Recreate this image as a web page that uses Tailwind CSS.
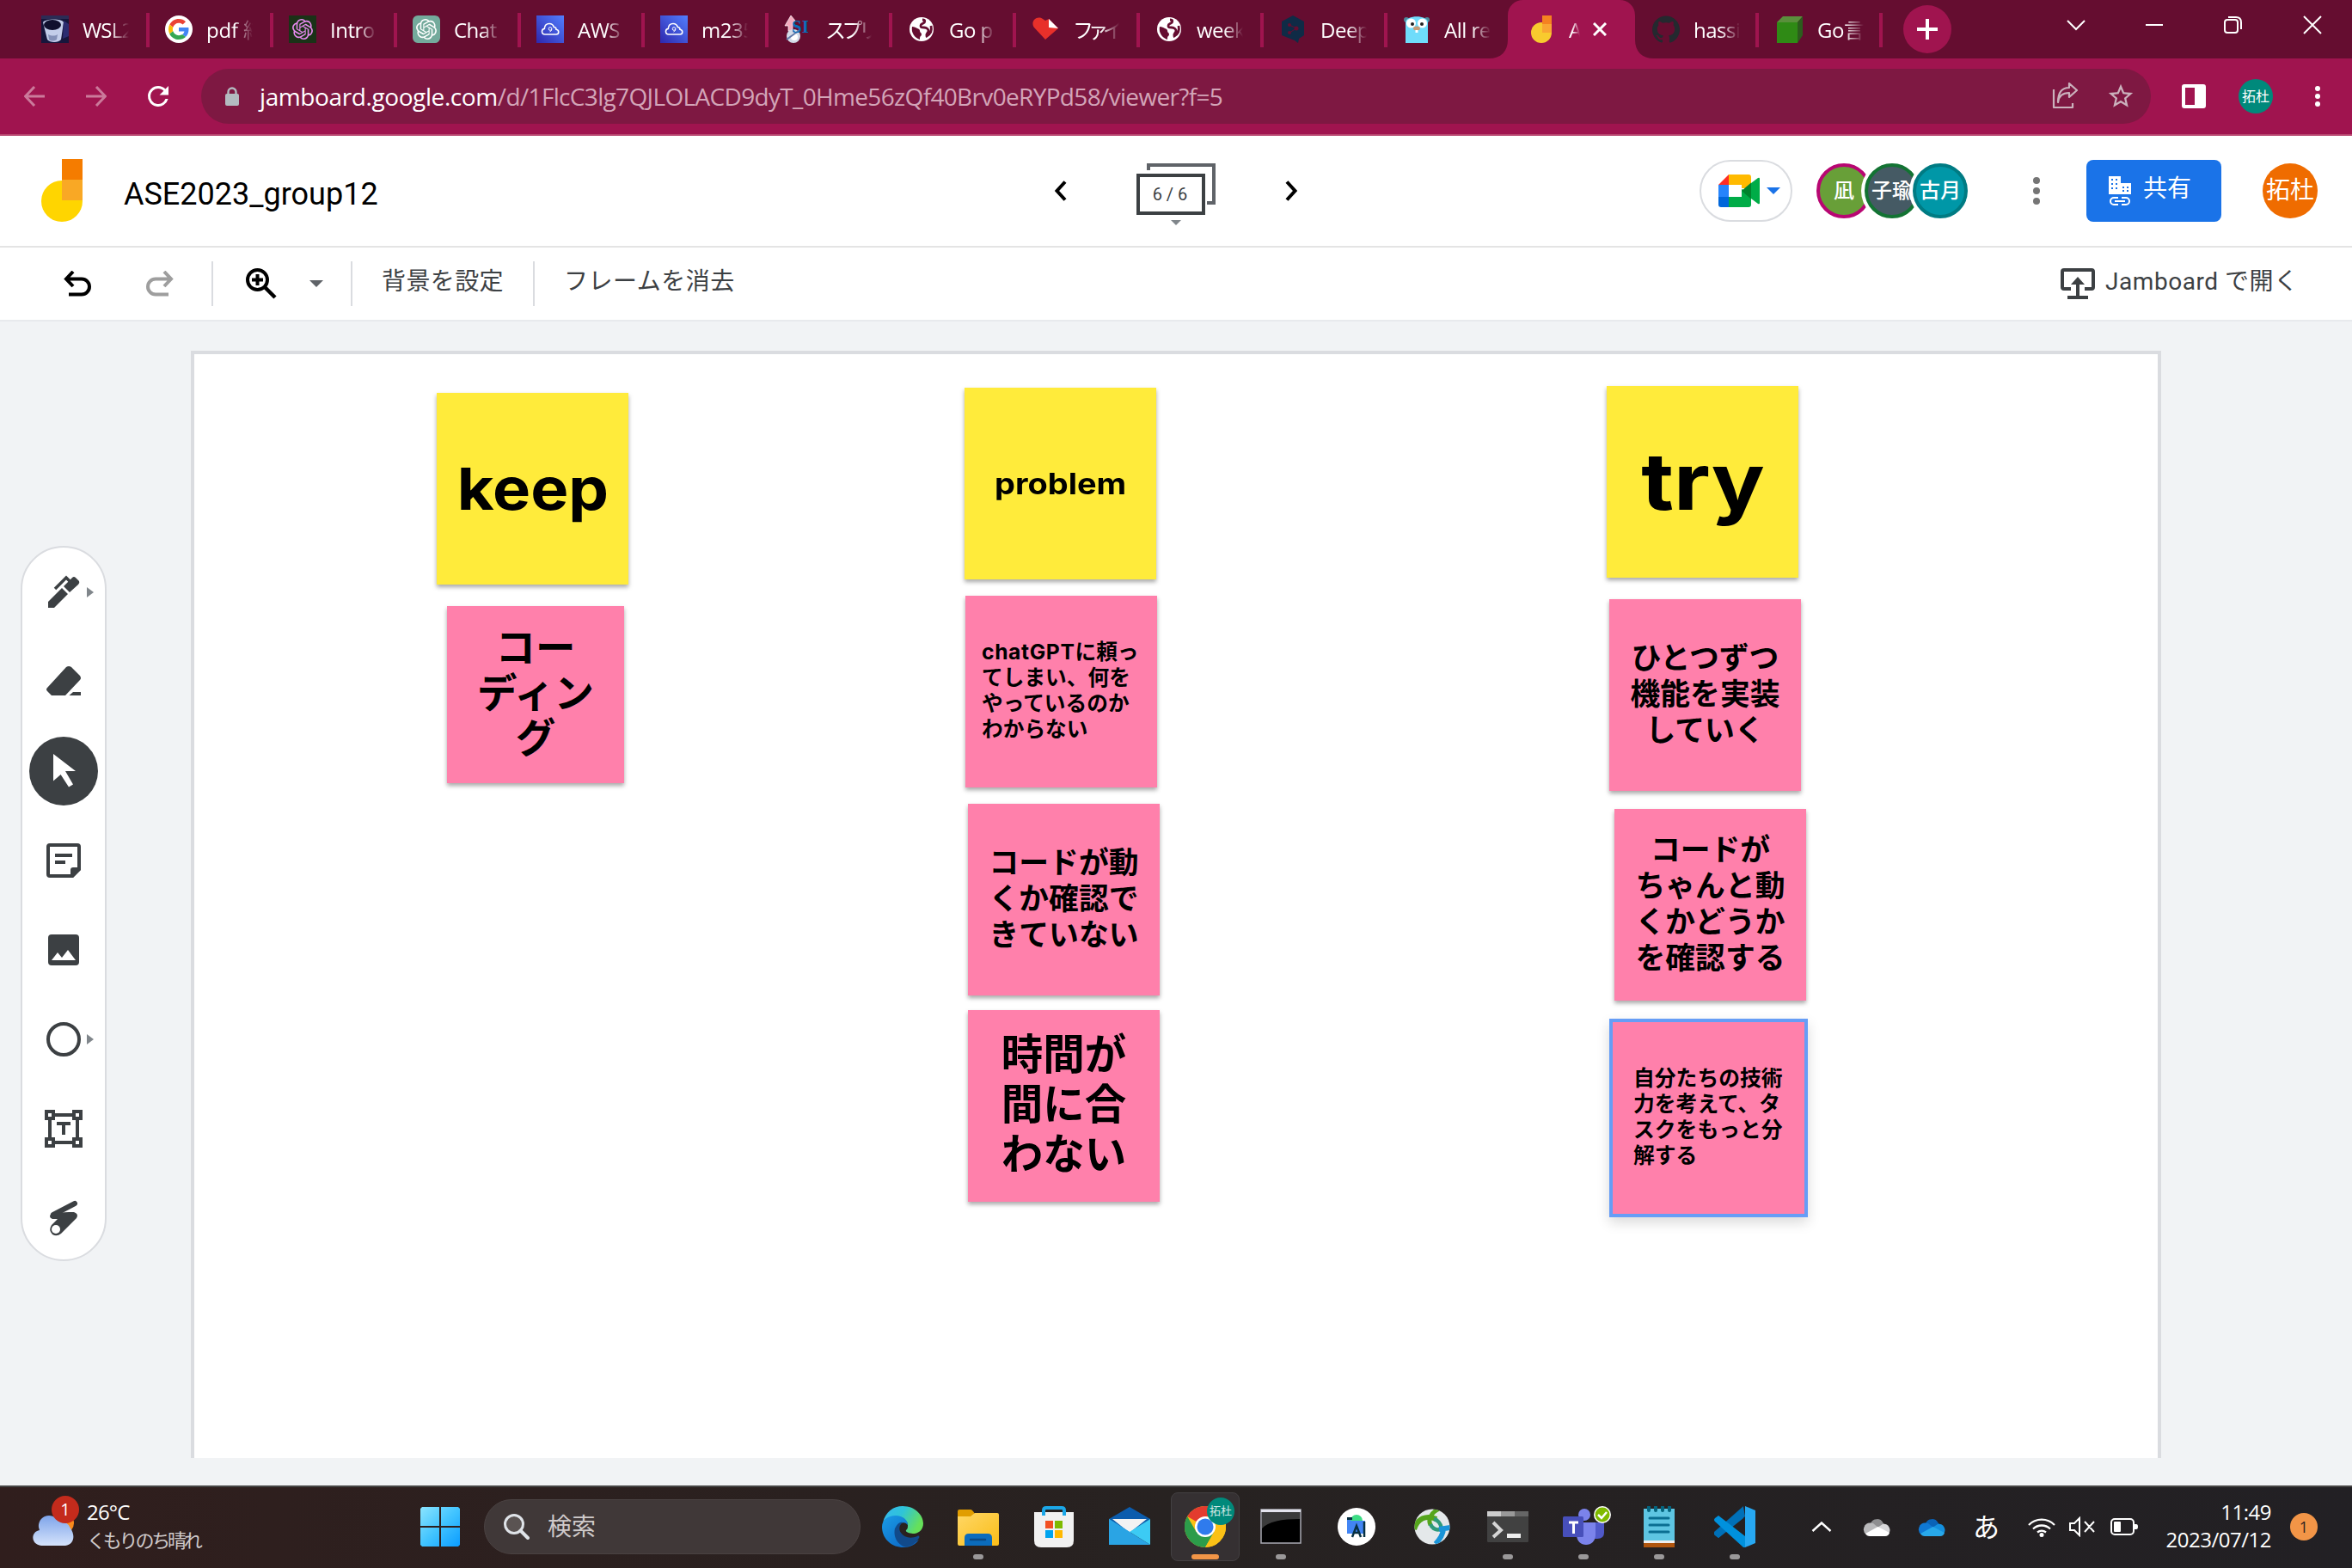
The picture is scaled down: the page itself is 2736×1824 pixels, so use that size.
<!DOCTYPE html>
<html lang="ja">
<head>
<meta charset="utf-8">
<title>ASE2023_group12 - Google Jamboard</title>
<script src="https://cdn.jsdelivr.net/npm/@tailwindcss/browser@4"></script>
</head>
<body class="w-[2736px] h-[1824px] overflow-hidden bg-[#f1f3f5] flex flex-col font-['Open_Sans','Noto_Sans_CJK_JP',sans-serif]">

<svg class="absolute size-0">
  <symbol id="openai" viewBox="0 0 24 24"><path d="M22.2819 9.8211a5.9847 5.9847 0 0 0-.5157-4.9108 6.0462 6.0462 0 0 0-6.5098-2.9A6.0651 6.0651 0 0 0 4.9807 4.1818a5.9847 5.9847 0 0 0-3.9977 2.9 6.0462 6.0462 0 0 0 .7427 7.0966 5.98 5.98 0 0 0 .511 4.9107 6.051 6.051 0 0 0 6.5146 2.9001A5.9847 5.9847 0 0 0 13.2599 24a6.0557 6.0557 0 0 0 5.7718-4.2058 5.9894 5.9894 0 0 0 3.9977-2.9001 6.0557 6.0557 0 0 0-.7475-7.0729zm-9.022 12.6081a4.4755 4.4755 0 0 1-2.8764-1.0408l.1419-.0804 4.7783-2.7582a.7948.7948 0 0 0 .3927-.6813v-6.7369l2.02 1.1686a.071.071 0 0 1 .038.0615v5.5826a4.504 4.504 0 0 1-4.4945 4.4944zm-9.6607-4.1254a4.4708 4.4708 0 0 1-.5346-3.0137l.142.0852 4.783 2.7582a.7712.7712 0 0 0 .7806 0l5.8428-3.3685v2.3324a.0804.0804 0 0 1-.0332.0615L9.74 19.9502a4.4992 4.4992 0 0 1-6.1408-1.6464zM2.3408 7.8956a4.485 4.485 0 0 1 2.3655-1.9728V11.6a.7664.7664 0 0 0 .3879.6765l5.8144 3.3543-2.0201 1.1685a.0757.0757 0 0 1-.071 0l-4.8303-2.7865A4.504 4.504 0 0 1 2.3408 7.872zm16.5963 3.8558L13.1038 8.364 15.1192 7.2a.0757.0757 0 0 1 .071 0l4.8303 2.7913a4.4944 4.4944 0 0 1-.6765 8.1042v-5.6772a.79.79 0 0 0-.407-.667zm2.0107-3.0231l-.142-.0852-4.7735-2.7818a.7759.7759 0 0 0-.7854 0L9.409 9.2297V6.8974a.0662.0662 0 0 1 .0284-.0615l4.8303-2.7866a4.4992 4.4992 0 0 1 6.6802 4.66zM8.3065 12.863l-2.02-1.1638a.0804.0804 0 0 1-.038-.0567V6.0742a4.4992 4.4992 0 0 1 7.3757-3.4537l-.142.0805L8.704 5.459a.7948.7948 0 0 0-.3927.6813zm1.0976-2.3654l2.602-1.4998 2.6069 1.4998v2.9994l-2.5974 1.4997-2.6067-1.4997Z"/></symbol>
  <symbol id="globe" viewBox="0 0 32 32"><circle cx="16" cy="16" r="14" fill="#fff"/><path d="M5 13c3 0 4 1 6 2s3 1 3 3 2 2 2 4-2 2-2 4v2a13 13 0 0 1-9-15z" fill="#650d30"/><path d="M17 5c4 0 3 3 1 4s-3 1-3 3 1 2 4 2 5 2 5 4-3 3-2 6c5-3 6-8 5-12" fill="none" stroke="#650d30" stroke-width="2.800"/></symbol>
  <symbol id="awscloud" viewBox="0 0 32 32"><rect width="32" height="32" fill="url(#awsg)"/><path d="M10 22c-2.500 0-3.500-1.700-3.500-3.400 0-1.700 1.200-3 2.800-3.200C9.500 11.500 12 9.500 15 9.500c3 0 4.700 1.900 5.300 4 1.700 0 2.700 1.300 2.700 2.700 1.800.2 2.800 1.500 2.800 3 0 1.700-1.200 2.800-3 2.800z" fill="none" stroke="#fff" stroke-width="1.600"/><circle cx="16" cy="15.500" r="1.800" fill="none" stroke="#fff" stroke-width="1"/><path d="M17.800 15.500c0 2-.8 3-2.300 3.500" fill="none" stroke="#fff" stroke-width="1"/></symbol>
  <symbol id="cloud" viewBox="0 0 32 22"><path d="M9 7A8 8 0 0 1 23.500 6.500L27 10 16 13z" fill="var(--a)"/><path d="M9 6.500A7.500 7.500 0 0 0 4 20L18 12 12 7z" fill="var(--b)"/><path d="M17 12l6-4a7 7 0 0 1 7 11z" fill="var(--c)"/><path d="M3 19l14.500-8L31 18c-.7 2.500-2.500 4-5 4H8c-2.500 0-4-1-5-3z" fill="var(--d)"/></symbol>
  <defs><linearGradient id="awsg" x1="0" y1="1" x2="1" y2="0"><stop offset="0" stop-color="#2e27ad"/><stop offset="1" stop-color="#527fff"/></linearGradient></defs>
</svg>

<!-- Tab strip -->
<div class="h-[68px] shrink-0 bg-[#650d30] flex pl-7 text-white text-[24px]">
  <div class="w-[144px] flex items-center pl-5 relative"><svg class="size-8 mr-4 shrink-0" viewBox="0 0 32 32"><rect width="32" height="32" fill="#16163c"/><rect width="32" height="4" fill="#2b2c55"/><path d="M2 8c2-4 21-5 24 0l-3 20c-3 4-13 4-16 0z" fill="#c3cdea"/><ellipse cx="13" cy="11" rx="10" ry="6" fill="#10102e"/><path d="M8 22c4 2 8 2 11 0l-1 6c-3 2-7 2-9 0z" fill="#8490b8"/><path d="M26 6l6 4v14l-7 3z" fill="#2b2c70"/></svg><span class="w-[54px] pt-[2px] overflow-hidden whitespace-nowrap tracking-[-0.8px] [mask-image:linear-gradient(to_right,black_60%,transparent)]">WSL2</span><i class="absolute -right-[2px] top-[15px] w-1 h-10 bg-[#a0144f]"></i></div>
  <div class="w-[144px] flex items-center pl-5 relative"><svg class="size-8 mr-4 shrink-0" viewBox="-8 -8 64 64"><circle cx="24" cy="24" r="32" fill="#fff"/><path fill="#EA4335" d="M24 9.500c3.540 0 6.710 1.220 9.210 3.600l6.850-6.850C35.900 2.380 30.470 0 24 0 14.620 0 6.510 5.380 2.560 13.220l7.980 6.190C12.430 13.720 17.740 9.500 24 9.500z"/><path fill="#4285F4" d="M46.980 24.550c0-1.570-.15-3.090-.38-4.550H24v9.020h12.940c-.58 2.960-2.260 5.480-4.780 7.180l7.730 6c4.510-4.180 7.090-10.360 7.090-17.650z"/><path fill="#FBBC05" d="M10.530 28.590c-.48-1.450-.76-2.990-.76-4.590s.27-3.140.76-4.590l-7.980-6.190C.92 16.460 0 20.120 0 24c0 3.880.92 7.540 2.560 10.780l7.970-6.190z"/><path fill="#34A853" d="M24 48c6.480 0 11.930-2.130 15.890-5.810l-7.730-6c-2.150 1.450-4.920 2.300-8.160 2.300-6.260 0-11.570-4.220-13.470-9.910l-7.980 6.190C6.510 42.620 14.620 48 24 48z"/></svg><span class="w-[54px] pt-[2px] overflow-hidden whitespace-nowrap tracking-[-0.2px] [mask-image:linear-gradient(to_right,black_60%,transparent)]">pdf 結</span><i class="absolute -right-[2px] top-[15px] w-1 h-10 bg-[#a0144f]"></i></div>
  <div class="w-[144px] flex items-center pl-5 relative"><div class="size-8 mr-4 shrink-0 bg-[#1a3217] grid place-items-center"><svg class="size-6 fill-[#e88af0]"><use href="#openai"/></svg></div><span class="w-[54px] pt-[2px] overflow-hidden whitespace-nowrap tracking-[-0.5px] [mask-image:linear-gradient(to_right,black_60%,transparent)]">Intro</span><i class="absolute -right-[2px] top-[15px] w-1 h-10 bg-[#a0144f]"></i></div>
  <div class="w-[144px] flex items-center pl-5 relative"><div class="size-8 mr-4 shrink-0 bg-[#74aa9c] rounded-md grid place-items-center"><svg class="size-6 fill-white"><use href="#openai"/></svg></div><span class="w-[54px] pt-[2px] overflow-hidden whitespace-nowrap tracking-[-0.5px] [mask-image:linear-gradient(to_right,black_60%,transparent)]">Chat</span><i class="absolute -right-[2px] top-[15px] w-1 h-10 bg-[#a0144f]"></i></div>
  <div class="w-[144px] flex items-center pl-5 relative"><svg class="size-8 mr-4 shrink-0"><use href="#awscloud"/></svg><span class="w-[54px] pt-[2px] overflow-hidden whitespace-nowrap tracking-[-0.5px] [mask-image:linear-gradient(to_right,black_60%,transparent)]">AWS</span><i class="absolute -right-[2px] top-[15px] w-1 h-10 bg-[#a0144f]"></i></div>
  <div class="w-[144px] flex items-center pl-5 relative"><svg class="size-8 mr-4 shrink-0"><use href="#awscloud"/></svg><span class="w-[54px] pt-[2px] overflow-hidden whitespace-nowrap tracking-[-0.5px] [mask-image:linear-gradient(to_right,black_60%,transparent)]">m235</span><i class="absolute -right-[2px] top-[15px] w-1 h-10 bg-[#a0144f]"></i></div>
  <div class="w-[144px] flex items-center pl-5 relative"><svg class="size-8 mr-4 shrink-0" viewBox="0 0 32 32"><path d="M8 0l5 6-3 2v10H5v-6H1z" fill="#f4a9bd" stroke="#fff" stroke-width=".7"/><circle cx="11" cy="24" r="8" fill="#d3dbe8"/><circle cx="12" cy="25" r="4" fill="#fff"/><path d="M3 28l15-11" stroke="#6179a8" stroke-width="2"/><text x="9" y="20" font-family="Liberation Serif,serif" font-weight="bold" font-size="21" fill="#0a6db8">SI</text></svg><span class="w-[54px] pt-[1px] overflow-hidden whitespace-nowrap tracking-[-4.5px] [mask-image:linear-gradient(to_right,black_60%,transparent)]">スプリ</span><i class="absolute -right-[2px] top-[15px] w-1 h-10 bg-[#a0144f]"></i></div>
  <div class="w-[144px] flex items-center pl-5 relative"><svg class="size-8 mr-4 shrink-0"><use href="#globe"/></svg><span class="w-[54px] pt-[2px] overflow-hidden whitespace-nowrap tracking-[-0.5px] [mask-image:linear-gradient(to_right,black_60%,transparent)]">Go p</span><i class="absolute -right-[2px] top-[15px] w-1 h-10 bg-[#a0144f]"></i></div>
  <div class="w-[144px] flex items-center pl-5 relative"><svg class="size-8 mr-4 shrink-0" viewBox="0 0 32 32"><path d="M16 28L3 14C-2 7 6-1 13 4l3 2 4-2 11 11z" fill="#e8302a"/><path d="M20 4l11 11-11-1z" fill="#fff"/></svg><span class="w-[54px] pt-[1px] overflow-hidden whitespace-nowrap tracking-[-6.500px] [mask-image:linear-gradient(to_right,black_60%,transparent)]">ファイル</span><i class="absolute -right-[2px] top-[15px] w-1 h-10 bg-[#a0144f]"></i></div>
  <div class="w-[144px] flex items-center pl-5 relative"><svg class="size-8 mr-4 shrink-0"><use href="#globe"/></svg><span class="w-[54px] pt-[2px] overflow-hidden whitespace-nowrap tracking-[-0.5px] [mask-image:linear-gradient(to_right,black_60%,transparent)]">week</span><i class="absolute -right-[2px] top-[15px] w-1 h-10 bg-[#a0144f]"></i></div>
  <div class="w-[144px] flex items-center pl-5 relative"><svg class="size-8 mr-4 shrink-0" viewBox="0 0 32 32"><path d="M16 0l13 7v16l-6 4-1 5-4-3L3 23V7z" fill="#0f2b46"/><g fill="#650d30"><circle cx="12" cy="11" r="2"/><circle cx="20" cy="15" r="2.500"/><circle cx="12" cy="20" r="2"/></g><path d="M12 11l8 4-8 5" stroke="#650d30" fill="none"/></svg><span class="w-[54px] pt-[2px] overflow-hidden whitespace-nowrap tracking-[-0.5px] [mask-image:linear-gradient(to_right,black_60%,transparent)]">Deep</span><i class="absolute -right-[2px] top-[15px] w-1 h-10 bg-[#a0144f]"></i></div>
  <div class="w-[144px] flex items-center pl-5 relative"><svg class="size-8 mr-4 shrink-0" viewBox="0 0 32 32"><circle cx="4" cy="5" r="3" fill="#4d8a9c"/><circle cx="28" cy="5" r="3" fill="#4d8a9c"/><path d="M3 32V8c0-9 26-9 26 0v24z" fill="#6fdcfb"/><circle cx="9.500" cy="9" r="5.500" fill="#fff"/><circle cx="22.500" cy="9" r="5.500" fill="#fff"/><circle cx="11" cy="10" r="2" fill="#222"/><circle cx="22" cy="10" r="2" fill="#222"/><ellipse cx="16" cy="15" rx="4" ry="2.500" fill="#c79b77"/><path d="M14.500 17h3v3h-3z" fill="#fff"/></svg><span class="w-[54px] pt-[2px] overflow-hidden whitespace-nowrap tracking-[-0.5px] [mask-image:linear-gradient(to_right,black_60%,transparent)]">All re</span></div>
  <div class="w-[144px] flex items-center pl-[25px] relative"><svg class="absolute -left-[24px] top-0 w-[192px] h-[68px]" viewBox="0 0 192 68"><path d="M0 68c14 0 22-8 22-22V18C22 7 30 0 40 0H152c10 0 18 7 18 18v28c0 14 8 22 22 22z" fill="#a0144f"/></svg><svg class="relative w-6 h-8 mr-5 shrink-0" viewBox="0 0 24 32"><circle cx="12" cy="20" r="12" fill="#f8cb2e"/><path d="M13 0h11v12H13z" fill="#f58220"/><path d="M13 10h11v10H13z" fill="#f9a633"/></svg><span class="relative w-[13px] pt-[2px] overflow-hidden [mask-image:linear-gradient(to_right,black_30%,transparent)]">A</span><svg class="relative size-4 ml-[15px]" viewBox="0 0 16 16"><path d="M1 1l14 14M15 1L1 15" stroke="#fff" stroke-width="3"/></svg></div>
  <div class="w-[144px] flex items-center pl-[22px] relative"><svg class="size-8 mr-4 shrink-0" viewBox="0 0 24 24"><path fill="#24292f" d="M12 .297c-6.630 0-12 5.373-12 12 0 5.303 3.438 9.800 8.205 11.385.6.113.82-.258.82-.577 0-.285-.010-1.040-.015-2.040-3.338.724-4.042-1.610-4.042-1.610C4.422 18.070 3.633 17.700 3.633 17.700c-1.087-.744.084-.729.084-.729 1.205.084 1.838 1.236 1.838 1.236 1.070 1.835 2.809 1.305 3.495.998.108-.776.417-1.305.760-1.605-2.665-.3-5.466-1.332-5.466-5.930 0-1.310.465-2.380 1.235-3.220-.135-.303-.54-1.523.105-3.176 0 0 1.005-.322 3.300 1.230.96-.267 1.980-.399 3-.405 1.020.006 2.040.138 3 .405 2.280-1.552 3.285-1.230 3.285-1.230.645 1.653.24 2.873.12 3.176.765.840 1.230 1.910 1.230 3.220 0 4.610-2.805 5.625-5.475 5.920.42.360.81 1.096.81 2.220 0 1.606-.015 2.896-.015 3.286 0 .315.210.690.825.570C20.565 22.092 24 17.592 24 12.297c0-6.627-5.373-12-12-12"/></svg><span class="w-[54px] pt-[2px] overflow-hidden whitespace-nowrap tracking-[-0.5px] [mask-image:linear-gradient(to_right,black_60%,transparent)]">hassi</span><i class="absolute -right-[2px] top-[15px] w-1 h-10 bg-[#a0144f]"></i></div>
  <div class="w-[144px] flex items-center pl-[22px] relative"><svg class="size-8 mr-4 shrink-0" viewBox="0 0 32 32"><path d="M1 8L8 1h23l-6 7z" fill="#5a8f3c"/><path d="M1 8h24v24H1z" fill="#2f8a15"/><path d="M25 8l6-7v22l-6 9z" fill="#2c5d1d"/></svg><span class="w-[54px] pt-[2px] overflow-hidden whitespace-nowrap tracking-[-0.5px] [mask-image:linear-gradient(to_right,black_60%,transparent)]">Go言</span><i class="absolute -right-[2px] top-[15px] w-1 h-10 bg-[#a0144f]"></i></div>
  <div class="ml-[26px] mt-[6px] size-14 rounded-full bg-[#a0144f] grid place-items-center"><svg class="size-6" viewBox="0 0 24 24"><path d="M12 0v24M0 12h24" stroke="#fff" stroke-width="4"/></svg></div>
  <svg class="ml-[134px] mt-[18px] w-[22px] h-[22px]" viewBox="0 0 22 22"><path d="M1 6l10 10L21 6" fill="none" stroke="#fff" stroke-width="2"/></svg>
  <svg class="ml-[70px] mt-[18px] w-5 h-[22px]" viewBox="0 0 20 22"><path d="M0 11h20" stroke="#fff" stroke-width="2"/></svg>
  <svg class="ml-[71px] mt-[18px] w-[22px] h-[22px]" viewBox="0 0 22 22"><rect x="1" y="5" width="15" height="15" rx="3" fill="none" stroke="#fff" stroke-width="2"/><path d="M5 2h9q6 0 6 6v8" fill="none" stroke="#fff" stroke-width="2"/></svg>
  <svg class="ml-[70px] mt-[18px] w-[22px] h-[22px]" viewBox="0 0 22 22"><path d="M1 1l20 20M21 1L1 21" stroke="#fff" stroke-width="2"/></svg>
</div>

<!-- Address bar -->
<div class="h-[90px] shrink-0 bg-[#a0144f] border-b-2 border-[#b8466f] flex items-center pl-7">
  <svg class="w-6 h-6" viewBox="0 0 24 24"><path d="M24 12H2M12 1L1.500 12 12 23" fill="none" stroke="#cb7a9b" stroke-width="3"/></svg>
  <svg class="w-6 h-6 ml-[48px]" viewBox="0 0 24 24"><path d="M0 12h22M12 1l10.500 11L12 23" fill="none" stroke="#cb7a9b" stroke-width="3"/></svg>
  <svg class="size-9 ml-[42px]" viewBox="0 0 24 24"><path d="M17.650 6.350A7.950 7.950 0 0 0 12 4a8 8 0 1 0 7.730 10h-2.080A6 6 0 1 1 12 6c1.660 0 3.140.69 4.220 1.780L13 11h7V4z" fill="#fff"/></svg>
  <div class="ml-[32px] w-[2268px] h-16 rounded-full bg-[#7e1842] flex items-center pl-[28px] text-[28px] whitespace-nowrap">
    <svg class="w-4 h-[22px] mr-6" viewBox="0 0 16 22"><rect y="8" width="16" height="14" rx="2" fill="#b3bac0"/><path d="M3.500 9V6a4.500 4.500 0 0 1 9 0v3" fill="none" stroke="#b3bac0" stroke-width="2.400"/></svg>
    <span class="w-[1120px] text-[#d3a5b8] tracking-[-0.660px]"><span class="text-white tracking-[-0.400px]">jamboard.google.com</span>/d/1FlcC3lg7QJLOLACD9dyT_0Hme56zQf40Brv0eRYPd58/viewer?f=5</span>
    <svg class="ml-[965px] w-8 h-8" viewBox="0 0 32 32"><path d="M2 8v21h22v-5M7 23c1-8 6-11 13-11V17l9-8-9-8v5C11 6 7 12 7 23z" fill="none" stroke="#cbb2bd" stroke-width="2.200" stroke-linejoin="round"/></svg>
    <svg class="ml-[31px] size-[34px]" viewBox="0 0 24 24"><path fill="#cbb2bd" d="M22 9.240l-7.190-.62L12 2 9.190 8.630 2 9.240l5.460 4.730L5.820 21 12 17.270 18.180 21l-1.630-7.030L22 9.240zM12 15.400l-3.760 2.270 1-4.280-3.320-2.880 4.380-.38L12 6.100l1.710 4.040 4.380.38-3.320 2.880 1 4.280L12 15.400z"/></svg>
  </div>
  <svg class="ml-[36px] size-7" viewBox="0 0 28 28"><path fill-rule="evenodd" d="M3 0h22a3 3 0 0 1 3 3v22a3 3 0 0 1-3 3H3a3 3 0 0 1-3-3V3a3 3 0 0 1 3-3zm1 4v20h11V4z" fill="#fff"/></svg>
  <div class="ml-[38px] size-10 rounded-full bg-[#00897b] text-white text-[16px] grid place-items-center">拓杜</div>
  <svg class="ml-[49px] w-[6px] h-6" viewBox="0 0 6 24"><g fill="#fff"><circle cx="3" cy="3" r="3"/><circle cx="3" cy="12" r="3"/><circle cx="3" cy="21" r="3"/></g></svg>
</div>

<!-- Document header -->
<div class="h-[130px] shrink-0 bg-white border-b-2 border-[#e4e4e4] flex items-center pl-12 font-['Roboto','Noto_Sans_CJK_JP',sans-serif]">
  <svg class="w-12 h-[74px]" viewBox="0 0 48 74"><circle cx="24" cy="49" r="24" fill="#ffd500"/><path d="M24 0h24v24H24z" fill="#f57c00"/><path d="M24 24h24v24H24z" fill="#f9a825"/></svg>
  <div class="ml-[48px] w-[300px] text-[36px] whitespace-nowrap text-black pt-[7px]">ASE2023_group12</div>
  <svg class="ml-[783px] w-[14px] h-6" viewBox="0 0 14 24"><path d="M12 1.500L2.500 12 12 22.500" fill="none" stroke="#000" stroke-width="4"/></svg>
  <div class="ml-[81px] w-[92px] h-[72px] relative">
    <svg class="absolute inset-0 w-[92px] h-[76px]" viewBox="0 0 92 76"><path d="M14 12V6h76v44h-8" fill="none" stroke="#5f6368" stroke-width="4"/><rect x="2" y="18" width="76" height="44" fill="#fff" stroke="#3c4043" stroke-width="4"/><path d="M40 70h12l-6 6z" fill="#80868b"/></svg>
    <div class="absolute -left-px top-[16px] w-20 h-12 grid place-items-center text-[20px] text-[#3c4043]">6 / 6</div>
  </div>
  <svg class="ml-[81px] w-[14px] h-6" viewBox="0 0 14 24"><path d="M2 1.500L11.500 12 2 22.500" fill="none" stroke="#000" stroke-width="4"/></svg>
  <div class="ml-[468px] w-[108px] h-[72px] rounded-full border-2 border-[#dadce0] flex items-center pl-5">
    <svg class="w-12 h-[38px]" viewBox="0 0 48 38"><path d="M12 0v12H0z" fill="#ff2d25"/><path d="M0 12h12v14H0z" fill="#2684fc"/><path d="M0 26h12v12H3a3 3 0 0 1-3-3z" fill="#0066da"/><path d="M12 0h23a3 3 0 0 1 3 3v13H27v-4H12z" fill="#ffba00"/><path d="M12 26h15V17l11 4v14a3 3 0 0 1-3 3H12z" fill="#00ac47"/><path d="M27 19L38 9.500v19z" fill="#00832d"/><path d="M38 10l8-6q2-1 2 1v28q0 2-2 1l-8-6z" fill="#00ac47"/></svg>
    <svg class="ml-2 w-4 h-2" viewBox="0 0 16 8"><path d="M0 0h16L8 8z" fill="#1a73e8"/></svg>
  </div>
  <div class="ml-[24px] flex text-white text-[24px] font-medium">
    <div class="size-[72px] rounded-full bg-white grid place-items-center"><div class="size-16 rounded-full bg-[#689f38] border-4 border-[#b80672] grid place-items-center">凪</div></div>
    <div class="-ml-4 size-[72px] rounded-full bg-white grid place-items-center"><div class="size-16 rounded-full bg-[#455a64] border-4 border-[#137333] flex items-center justify-center whitespace-nowrap">子瑜</div></div>
    <div class="-ml-4 size-[72px] rounded-full bg-white grid place-items-center"><div class="size-16 rounded-full bg-[#0097a7] border-4 border-[#007b83] flex items-center justify-center whitespace-nowrap">古月</div></div>
  </div>
  <svg class="ml-[72px] w-2 h-8" viewBox="0 0 8 32"><g fill="#757575"><circle cx="4" cy="4" r="4"/><circle cx="4" cy="16" r="4"/><circle cx="4" cy="28" r="4"/></g></svg>
  <div class="ml-[54px] w-[157px] h-[72px] rounded-lg bg-[#1a73e8] flex items-center pl-[26px] text-white text-[28px]">
    <svg class="w-[26px] h-[34px]" viewBox="0 0 26 34"><path fill-rule="evenodd" fill="#fff" d="M0 0h14v8h12v13H0zM3 3v2h2V3zm5 0v2h2V3zM3 8v2h2V8zm5 0v2h2V8zM3 13v2h2v-2zm5 0v2h2v-2zM16 12v2h2v-2zm5 0v2h2v-2zM16 16v2h2v-2zm5 0v2h2v-2z"/><path d="M11 25H6a4 4 0 0 0 0 8h5M15 25h5a4 4 0 0 1 0 8h-5M7 29h12" fill="none" stroke="#fff" stroke-width="2"/></svg>
    <span class="ml-[14px] -mt-1">共有</span>
  </div>
  <div class="ml-[48px] size-16 rounded-full bg-[#ef6c00] text-white text-[28px] grid place-items-center">拓杜</div>
</div>

<!-- Jam toolbar -->
<div class="h-[86px] shrink-0 bg-white border-b-2 border-[#e8eaed] flex items-center pl-[74px] pr-[66px] text-[28px] text-[#3c4043] font-['Roboto','Noto_Sans_CJK_JP',sans-serif]">
  <svg class="w-8 h-[30px]" viewBox="0 0 32 30"><path d="M11 1L3 9.500 11 18M3 9.500h18a9 9 0 0 1 0 18H6" fill="none" stroke="#000" stroke-width="4"/></svg>
  <svg class="ml-16 w-8 h-[30px]" viewBox="0 0 32 30"><path d="M21 1l8 8.500L21 18M29 9.500H11a9 9 0 0 0 0 18h15" fill="none" stroke="#9e9e9e" stroke-width="4"/></svg>
  <i class="ml-11 w-[2px] h-[52px] bg-[#dadce0]"></i>
  <svg class="ml-[38px] w-9 h-9" viewBox="0 0 36 36"><circle cx="13.500" cy="13.500" r="11.500" fill="none" stroke="#000" stroke-width="4"/><path d="M22 22l12 12" stroke="#000" stroke-width="4.500"/><path d="M13.500 7v13M7 13.500h13" stroke="#000" stroke-width="4"/></svg>
  <svg class="ml-[38px] w-4 h-2" viewBox="0 0 16 8"><path d="M0 0h16L8 8z" fill="#5f6368"/></svg>
  <i class="ml-8 w-[2px] h-[52px] bg-[#dadce0]"></i>
  <span class="ml-[34px] w-[142px] -mt-1 whitespace-nowrap tracking-[0.400px]">背景を設定</span>
  <i class="ml-[34px] w-[2px] h-[52px] bg-[#dadce0]"></i>
  <span class="ml-[34px] -mt-1 whitespace-nowrap tracking-[0.500px]">フレームを消去</span>
  <div class="ml-auto flex items-center">
    <svg class="w-10 h-9" viewBox="0 0 40 36"><path d="M12 24H4a2 2 0 0 1-2-2V4a2 2 0 0 1 2-2h32a2 2 0 0 1 2 2v18a2 2 0 0 1-2 2h-8" fill="none" stroke="#3c4043" stroke-width="4"/><path d="M20 10l8 9h-6v13h10v4H8v-4h10V19h-6z" fill="#3c4043"/></svg>
    <span class="ml-3 -mt-1 w-[221px] whitespace-nowrap tracking-[0.550px]">Jamboard で開く</span>
  </div>
</div>

<!-- Workspace -->
<div class="relative flex-1 overflow-hidden">
  <div class="absolute left-[222px] top-[34px] w-[2292px] h-[1288px] bg-white border-4 border-b-0 border-[#dadce0]"></div>

  <!-- Tool palette -->
  <div class="absolute left-6 top-[261px] w-[100px] h-[832px] rounded-full bg-white border-2 border-[#dadce0] flex flex-col items-center pt-[12px] gap-6 text-[#3c4043]">
    <div class="relative size-20 grid place-items-center"><svg class="size-12 fill-current" viewBox="0 0 48 48"><path d="M6 42v-7l16-16 7 7-16 16zM24 17L34 7q2-2 4 0l4 4q1 2-1 4L31 24z"/><path d="M14 20L27 7l4 4" fill="none" stroke="currentColor" stroke-width="3.500"/></svg><svg class="absolute left-[67px] top-[34px] w-2 h-3" viewBox="0 0 8 12"><path d="M0 0l8 6-8 6z" fill="#80868b"/></svg></div>
    <div class="size-20 grid place-items-center"><svg class="size-12 fill-current" viewBox="0 0 48 48"><path d="M5 31L27 7q3-2 6 0l10 10q2 3 0 5L26 40H10l-5-5q-2-2 0-4zM30.500 40l4.500-4h9v4z"/></svg></div>
    <div class="size-20 rounded-full bg-[#3c4043] grid place-items-center"><svg class="size-12" viewBox="0 0 48 48"><path d="M12 4l26 20H26l9 15.500-5 3L20.600 28 12 35.500z" fill="#fff"/></svg></div>
    <div class="size-20 grid place-items-center"><svg class="size-12" viewBox="0 0 48 48"><path d="M8 6h32q2 0 2 2v26l-8 8H8q-2 0-2-2V8q0-2 2-2z" fill="none" stroke="currentColor" stroke-width="4"/><path d="M32 44V35q0-3 3-3h9v3l-9 9z" fill="currentColor"/><path d="M14 18h20M14 26h12" stroke="currentColor" stroke-width="4"/></svg></div>
    <div class="size-20 grid place-items-center"><svg class="size-12" viewBox="0 0 48 48"><rect x="6" y="6" width="36" height="36" rx="4" fill="currentColor"/><path d="M10 36l7-9 5 6 7-9 9 12z" fill="#fff"/></svg></div>
    <div class="relative size-20 grid place-items-center"><svg class="size-12" viewBox="0 0 48 48"><circle cx="24" cy="24" r="18" fill="none" stroke="currentColor" stroke-width="4"/></svg><svg class="absolute left-[67px] top-[34px] w-2 h-3" viewBox="0 0 8 12"><path d="M0 0l8 6-8 6z" fill="#80868b"/></svg></div>
    <div class="size-20 grid place-items-center"><svg class="size-12" viewBox="0 0 48 48"><g fill="none" stroke="currentColor" stroke-width="4"><path d="M14 8h20M14 40h20M8 14v20M40 14v20M4 4h8v8H4zM36 4h8v8h-8zM4 36h8v8H4zM36 36h8v8h-8z"/><path d="M16 18h16M24 18v13"/></g></svg></div>
    <div class="size-20 grid place-items-center"><svg class="size-12" viewBox="0 0 48 48"><path d="M12 20L37 7" stroke="currentColor" stroke-width="6" stroke-linecap="round"/><path d="M8 22q0-3 4-4l18-1h6q6 2 3 7L21 42q-5 4-10 1-5-5-1-11l7-7h-6q-3-1-3-3z" fill="currentColor"/><circle cx="15" cy="37" r="5" fill="#fff"/></svg></div>
  </div>

  <!-- Sticky notes -->
  <div class="absolute inset-0 font-['Inter','Noto_Sans_CJK_JP',sans-serif] font-bold text-black text-center">
    <div class="absolute left-[508px] top-[83px] size-[223px] bg-[#ffeb3b] shadow-[0_3px_5px_rgba(0,0,0,0.35)] flex items-center justify-center text-[68px]"><span class="scale-x-[1.09] pb-[2px]">keep</span></div>
    <div class="absolute left-[520px] top-[331px] size-[206px] bg-[#ff80ab] shadow-[0_3px_5px_rgba(0,0,0,0.35)] flex items-center justify-center text-[46.500px] leading-[52.500px] pb-[4px]">コー<br>ディン<br>グ</div>
    <div class="absolute left-[1122px] top-[77px] size-[223px] bg-[#ffeb3b] shadow-[0_3px_5px_rgba(0,0,0,0.35)] flex items-center justify-center text-[34.500px]"><span class="scale-x-[1.10]">problem</span></div>
    <div class="absolute left-[1123px] top-[319px] size-[223px] bg-[#ff80ab] shadow-[0_3px_5px_rgba(0,0,0,0.35)] flex items-center pl-[19px] pb-[3px] text-left text-[24.700px] leading-[30px] whitespace-nowrap"><p><span class="tracking-[0.600px]">chatGPT</span>に頼っ<br>てしまい、何を<br>やっているのか<br>わからない</p></div>
    <div class="absolute left-[1126px] top-[561px] size-[223px] bg-[#ff80ab] shadow-[0_3px_5px_rgba(0,0,0,0.35)] flex items-center justify-center pb-[3px] text-[34.800px] leading-[42px]">コードが動<br>くか確認で<br>きていない</div>
    <div class="absolute left-[1126px] top-[801px] size-[223px] bg-[#ff80ab] shadow-[0_3px_5px_rgba(0,0,0,0.35)] flex items-center justify-center pb-[4px] text-[48.500px] leading-[58px]">時間が<br>間に合<br>わない</div>
    <div class="absolute left-[1869px] top-[75px] size-[223px] bg-[#ffeb3b] shadow-[0_3px_5px_rgba(0,0,0,0.35)] flex items-center justify-center text-[92px]"><span class="scale-x-[1.12] pb-[2px]">try</span></div>
    <div class="absolute left-[1872px] top-[323px] size-[223px] bg-[#ff80ab] shadow-[0_3px_5px_rgba(0,0,0,0.35)] flex items-center justify-center pb-[4px] text-[34.800px] leading-[42px]">ひとつずつ<br>機能を実装<br>していく</div>
    <div class="absolute left-[1878px] top-[567px] size-[223px] bg-[#ff80ab] shadow-[0_3px_5px_rgba(0,0,0,0.35)] flex items-center justify-center pb-[4px] text-[34.800px] leading-[42px]">コードが<br>ちゃんと動<br>くかどうか<br>を確認する</div>
    <div class="absolute left-[1872px] top-[811px] size-[231px] bg-[#ff80ab] border-4 border-[#669df6] shadow-[0_6px_14px_rgba(0,0,0,0.15)] flex items-center pl-[24px] pb-[3px] text-left text-[24.800px] leading-[30px] whitespace-nowrap"><p>自分たちの技術<br>力を考えて、タ<br>スクをもっと分<br>解する</p></div>
  </div>
</div>

<!-- Taskbar -->
<div class="h-24 shrink-0 border-t-2 border-[#454443] bg-linear-to-r from-[#301e1d] via-[#272221] to-[#222024] flex items-center text-white pb-[2px]">
  <div class="w-[489px] flex items-center pl-[38px]">
    <div class="relative w-12 h-16">
      <svg class="absolute left-0 top-0 w-[50px] h-16" viewBox="0 0 50 64"><circle cx="36" cy="28" r="12" fill="#f98a1c"/><path d="M8 36a12 12 0 0 1 22-10 12 12 0 0 1 14 8c6 8 4 19-6 20H10C-2 53-3 38 8 36z" fill="url(#wc)"/><defs><linearGradient id="wc" x1="0" y1="0" x2="0" y2="1"><stop offset="0" stop-color="#7ea4ea"/><stop offset="1" stop-color="#d5e3fb"/></linearGradient></defs></svg>
      <div class="absolute left-[22px] -top-[4px] size-8 rounded-full bg-[#c42b1c] grid place-items-center text-[20px]">1</div>
    </div>
    <div class="ml-[15px] text-[24px] leading-8 whitespace-nowrap tracking-[-0.8px] pb-[2px]"><div>26°C</div><div class="text-[#cfcaca] text-[22px] tracking-[-3.200px]">くもりのち晴れ</div></div>
  </div>
  <svg class="w-[46px] h-[46px]" viewBox="0 0 46 46"><defs><linearGradient id="win" x1="0" y1="0" x2="1" y2="1"><stop offset="0" stop-color="#8be4ff"/><stop offset=".5" stop-color="#42c4ff"/><stop offset="1" stop-color="#0a9cff"/></linearGradient></defs><path d="M2 0h20v22H0V2zM24 0h20l2 2v20H24zM0 24h22v22H2l-2-2zM24 24h22v20l-2 2H24z" fill="url(#win)"/></svg>
  <div class="ml-[28px] w-[438px] h-16 rounded-full bg-[#403838] border border-[#4a4242] flex items-center pl-[22px] text-[28px] text-[#cfcaca]">
    <svg class="w-[30px] h-[30px] mr-[21px]" viewBox="0 0 30 30"><circle cx="12" cy="12" r="10.500" fill="#5a5352" stroke="#dfe3e8" stroke-width="3"/><path d="M19.500 19.500L28 28" stroke="#dfe3e8" stroke-width="4" stroke-linecap="round"/></svg><span class="pb-[3px]">検索</span>
  </div>
  <div class="ml-[5px] flex items-center">
    <div class="w-[88px] h-20 grid place-items-center"><svg class="size-12" viewBox="0 0 48 48"><defs><linearGradient id="e1" x1="0" y1="0" x2="1" y2=".4"><stop offset="0" stop-color="#35b6f2"/><stop offset=".5" stop-color="#2fc4d8"/><stop offset="1" stop-color="#66e05a"/></linearGradient><linearGradient id="e2" x1="0" y1="0" x2="1" y2="1"><stop offset="0" stop-color="#1a9be6"/><stop offset="1" stop-color="#0a5fc0"/></linearGradient></defs><path d="M1 19C4 7 13 0 24 0c15 0 24 11 24 20 0 8-6 12-12 12-5 0-9-2-8-4 2-2 2-3 2-6 0-5-6-10-13-10C9 12 3 15 1 19z" fill="url(#e1)"/><path d="M0 24c0-8 7-13 16-13 8 0 14 5 14 11-2-3-6-4-9-1-4 3-4 9-1 14 4 7 13 10 20 6l3-2c-4 6-11 9-18 9C11 48 0 38 0 24z" fill="url(#e2)"/><path d="M15 26c3-6 6-8 9-7-4 3-5 8-2 12 4 6 12 7 19 4 2-1 3 0 2 2-4 7-11 11-18 10-8-4-12-12-10-21z" fill="#114a8b"/></svg></div>
    <div class="w-[88px] h-20 grid place-items-center relative"><svg class="size-12" viewBox="0 0 48 48"><defs><linearGradient id="fo" x1="0" y1="0" x2="1" y2="1"><stop offset="0" stop-color="#ffd766"/><stop offset="1" stop-color="#f9bd18"/></linearGradient></defs><path d="M0 6q0-2 2-2h13q2 0 5 5v6H0z" fill="#e19d00"/><path d="M0 12h15l5-4h26q2 0 2 2v34q0 2-2 2H2q-2 0-2-2z" fill="url(#fo)"/><path d="M8 46V37q0-5 5-5h22q5 0 5 5v9z" fill="#0b6cbd"/><path d="M15 39h17" stroke="#0a4a86" stroke-width="2.500" stroke-linecap="round"/></svg><i class="absolute bottom-[2px] w-3 h-[6px] rounded-full bg-[#9a9899]"></i></div>
    <div class="w-[88px] h-20 grid place-items-center"><svg class="size-12" viewBox="0 0 48 48"><path d="M1 7h46v33q0 8-8 8H9q-8 0-8-8z" fill="#f1f1f1"/><path d="M12 11V5q0-3 3-3h18q3 0 3 3v6" fill="none" stroke="#1ba7e8" stroke-width="4"/><path d="M14 17h9v9h-9z" fill="#f25022"/><path d="M25 17h9v9h-9z" fill="#7fba00"/><path d="M14 28h9v9h-9z" fill="#00a4ef"/><path d="M25 28h9v9h-9z" fill="#ffb900"/></svg></div>
    <div class="w-[88px] h-20 grid place-items-center"><svg class="size-12" viewBox="0 0 48 48"><path d="M0 15L24 1l24 14-24 16z" fill="#0b5cad"/><path d="M4 15h40L24 31z" fill="#f3f3f3"/><path d="M0 15l24 15v15H0z" fill="#28a8ea"/><path d="M48 15L24 30l24 15z" fill="#3ccbf4"/><path d="M0 45V15l48 30z" fill="#2aa4e4"/></svg></div>
    <div class="w-[88px] h-20 grid place-items-center relative"><div class="absolute inset-x-1 inset-y-0 rounded-lg bg-[#353032] border border-[#434042]"></div><svg class="relative size-12" viewBox="0 0 48 48"><circle cx="24" cy="24" r="24" fill="#fbc116"/><path d="M24 24L3.200 12A24 24 0 0 1 44.800 12z" fill="#e33b2e"/><path d="M3.200 12A24 24 0 0 0 24 48L34.400 30 13.600 30z" fill="#2c9c4a"/><path d="M24 12h20.800A24 24 0 0 1 24 48l10.400-18z" fill="#fbc116"/><circle cx="24" cy="24" r="12" fill="#fff"/><circle cx="24" cy="24" r="9.500" fill="#2f7bed"/></svg><div class="absolute left-[46px] top-[6px] size-8 rounded-full bg-[#00897b] grid place-items-center text-[13px] text-[#cfe8e5]">拓杜</div><i class="absolute bottom-[2px] w-8 h-[6px] rounded-full bg-[#f29547]"></i></div>
    <div class="w-[88px] h-20 grid place-items-center relative"><svg class="size-12" viewBox="0 0 48 48"><path d="M1 4h46v39H1z" fill="#000" stroke="#a9a9b3" stroke-width="1.500"/><path d="M2 7h44v8C25 15 9 18 2 26z" fill="#3b3b3b"/><path d="M1 4h46v3H1z" fill="#e4e4ee"/></svg><i class="absolute bottom-[2px] w-3 h-[6px] rounded-full bg-[#9a9899]"></i></div>
    <div class="w-[88px] h-20 grid place-items-center"><svg class="size-11" viewBox="0 0 44 44"><circle cx="22" cy="22" r="22" fill="#fff"/><path d="M11 12h6l3 3h12v15H11z" fill="#4285f4"/><path d="M15 15a7 7 0 0 1 14 0z" fill="#3ddc84"/><path d="M17 34l5-13 5 13M19 29h6M31 16v18" fill="none" stroke="#073042" stroke-width="2.500"/><path d="M11 11h6v3h-6z" fill="#073042"/></svg></div>
    <div class="w-[88px] h-20 grid place-items-center"><svg class="size-11" viewBox="0 0 44 44"><defs><clipPath id="orb"><circle cx="22" cy="22" r="20.500"/></clipPath></defs><circle cx="22" cy="22" r="20.500" fill="#e4e8ea"/><g clip-path="url(#orb)" fill="none"><path d="M1 25C5 12 15 8 27 13" stroke="#55a51c" stroke-width="6"/><path d="M30 1C20 6 17 14 20 20" stroke="#55a51c" stroke-width="5"/><path d="M20 19c2 6 9 8 13 5-1-6-5-10-9-11" stroke="#2f9a7a" stroke-width="4.500"/><path d="M30 25l13-2M35 24c0 7-4 12-9 18" stroke="#1a94d8" stroke-width="6"/></g></svg></div>
    <div class="w-[88px] h-20 grid place-items-center relative"><svg class="size-12" viewBox="0 0 48 48"><rect y="6" width="48" height="36" rx="1.500" fill="#414141"/><path d="M0 6h16v6H0z" fill="#ccc"/><path d="M16 6h16v6H16z" fill="#999"/><path d="M32 6h16v6H32z" fill="#666"/><path d="M7 19l9 9-9 8" fill="none" stroke="#d5d5d5" stroke-width="4"/><path d="M23 32h16v5H23z" fill="#eee"/></svg><i class="absolute bottom-[2px] w-3 h-[6px] rounded-full bg-[#9a9899]"></i></div>
    <div class="w-[88px] h-20 grid place-items-center relative"><svg class="w-14 h-12 ml-2" viewBox="0 0 56 48"><circle cx="25" cy="10" r="7" fill="#7b83eb"/><path d="M37 19h11v12q0 7-8 7h-5z" fill="#5059c9"/><path d="M18 19h20v14c0 8-5 12-11 12s-11-4-11-12z" fill="#7b83eb"/><rect y="12" width="24" height="24" rx="1.500" fill="#474fba"/><path d="M7 19h11M12.500 19v13" stroke="#fff" stroke-width="3"/><circle cx="46" cy="10" r="10" fill="#fff"/><circle cx="46" cy="10" r="8.500" fill="#7fba00"/><path d="M41 10l4 4 6-7" fill="none" stroke="#fff" stroke-width="2.500"/></svg><i class="absolute bottom-[2px] w-3 h-[6px] rounded-full bg-[#9a9899]"></i></div>
    <div class="w-[88px] h-20 grid place-items-center relative"><svg class="size-12" viewBox="0 0 48 48"><rect x="6" y="42" width="36" height="6" fill="#b0560f"/><rect x="6" y="39" width="36" height="4" fill="#eee"/><rect x="6" y="3" width="36" height="37" fill="#5ec5e2"/><path d="M12 1v4M20 1v4M28 1v4M36 1v4" stroke="#04657f" stroke-width="4" stroke-linecap="round"/><path d="M13 14h22M13 22h22M13 30h22" stroke="#0a6e92" stroke-width="3" stroke-linecap="round"/></svg><i class="absolute bottom-[2px] w-3 h-[6px] rounded-full bg-[#9a9899]"></i></div>
    <div class="w-[88px] h-20 grid place-items-center relative"><svg class="size-12" viewBox="0 0 48 48"><path d="M34 0v14L5 37l-5-4v-3z" fill="#0069ad"/><path d="M36 12L5 37l-4-3q-2-2 0-4L34 1z" fill="#0070b8"/><path d="M5 11l31 24v13h-2L1 18q-2-2 0-4z" fill="#0091dd"/><path d="M36 0l12 5v38l-12 5z" fill="#27a8f2"/></svg><i class="absolute bottom-[2px] w-3 h-[6px] rounded-full bg-[#9a9899]"></i></div>
  </div>
  <svg class="ml-[45px] w-6 h-3" viewBox="0 0 24 12"><path d="M1.500 11L12 1.500 22.500 11" fill="none" stroke="#fff" stroke-width="2.500"/></svg>
  <svg class="ml-[36px] w-8 h-[22px] [--a:#8e8e90] [--b:#b9b9bb] [--c:#d8d8da] [--d:#ffffff]"><use href="#cloud"/></svg>
  <svg class="ml-[32px] w-8 h-[22px] [--a:#0a63b8] [--b:#0f78d4] [--c:#1490df] [--d:#28a8ea]"><use href="#cloud"/></svg>
  <span class="ml-[32px] w-[30px] text-[31px] leading-none pb-[4px] font-['Noto_Sans_CJK_JP',sans-serif]">あ</span>
  <svg class="ml-[34px] w-8 h-6" viewBox="0 0 32 24"><path d="M1 10a21 21 0 0 1 30 0M6 14.500a14.500 14.500 0 0 1 20 0M11 18.500a8 8 0 0 1 10 0" fill="none" stroke="#fff" stroke-width="2.300"/><circle cx="16" cy="21.500" r="2.500" fill="#fff"/></svg>
  <svg class="ml-[15px] w-8 h-6" viewBox="0 0 32 24"><path d="M2 8v8h5l6 6V2L7 8zM19 6l11 12M30 6L19 18" fill="none" stroke="#fff" stroke-width="2"/></svg>
  <svg class="ml-[17px] w-8 h-5" viewBox="0 0 32 20"><rect x="1" y="1" width="26" height="18" rx="4" fill="none" stroke="#fff" stroke-width="2"/><rect x="4" y="4" width="8" height="12" rx="1" fill="#fff"/><path d="M28 7h2q2 0 2 3t-2 3h-2z" fill="#fff"/></svg>
  <div class="ml-[28px] w-[127px] text-right text-[24px] leading-8 tracking-[-0.500px] whitespace-nowrap pb-[2px]"><div>11:49</div><div>2023/07/12</div></div>
  <div class="ml-[22px] size-8 rounded-full bg-[#f29547] grid place-items-center text-[18px] text-[#2a2220]">1</div>
</div>
</body>
</html>
